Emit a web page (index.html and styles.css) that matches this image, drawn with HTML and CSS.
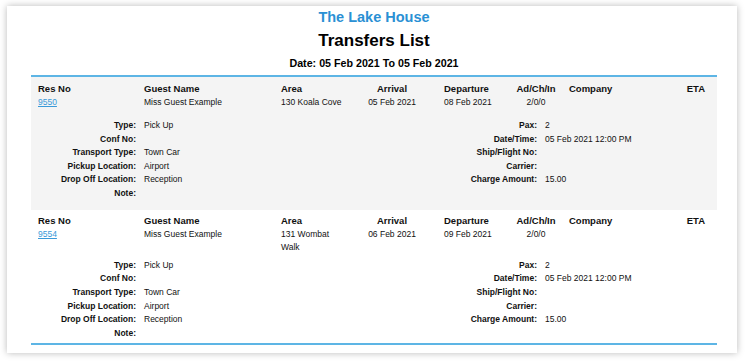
FILE: index.html
```html
<!DOCTYPE html>
<html>
<head>
<meta charset="utf-8">
<title>Transfers List</title>
<link rel="stylesheet" href="styles.css">
</head>
<body>
<div class="page">
  <div class="card">
    <div class="hotel">The Lake House</div>
    <h1 class="title">Transfers List</h1>
    <div class="range">Date: 05 Feb 2021 To 05 Feb 2021</div>
    <div class="report">
      <div class="record shaded">
        <div class="cols head">
          <div class="c1">Res No</div>
          <div class="c2">Guest Name</div>
          <div class="c3">Area</div>
          <div class="c4">Arrival</div>
          <div class="c5">Departure</div>
          <div class="c6">Ad/Ch/In</div>
          <div class="c7">Company</div>
          <div class="c8">ETA</div>
        </div>
        <div class="cols vals">
          <div class="c1"><a href="#" class="res">9550</a></div>
          <div class="c2">Miss Guest Example</div>
          <div class="c3">130 Koala Cove</div>
          <div class="c4">05 Feb 2021</div>
          <div class="c5">08 Feb 2021</div>
          <div class="c6">2/0/0</div>
          <div class="c7"></div>
          <div class="c8"></div>
        </div>
        <div class="details">
          <div class="lbl">Type:</div><div class="val">Pick Up</div><div class="lbl">Pax:</div><div class="val">2</div>
          <div class="lbl">Conf No:</div><div class="val"></div><div class="lbl">Date/Time:</div><div class="val">05 Feb 2021 12:00 PM</div>
          <div class="lbl">Transport Type:</div><div class="val">Town Car</div><div class="lbl">Ship/Flight No:</div><div class="val"></div>
          <div class="lbl">Pickup Location:</div><div class="val">Airport</div><div class="lbl">Carrier:</div><div class="val"></div>
          <div class="lbl">Drop Off Location:</div><div class="val">Reception</div><div class="lbl">Charge Amount:</div><div class="val">15.00</div>
          <div class="lbl">Note:</div><div class="val"></div><div class="lbl"></div><div class="val"></div>
        </div>
      </div>
      <div class="record">
        <div class="cols head">
          <div class="c1">Res No</div>
          <div class="c2">Guest Name</div>
          <div class="c3">Area</div>
          <div class="c4">Arrival</div>
          <div class="c5">Departure</div>
          <div class="c6">Ad/Ch/In</div>
          <div class="c7">Company</div>
          <div class="c8">ETA</div>
        </div>
        <div class="cols vals">
          <div class="c1"><a href="#" class="res">9554</a></div>
          <div class="c2">Miss Guest Example</div>
          <div class="c3">131 Wombat Walk</div>
          <div class="c4">06 Feb 2021</div>
          <div class="c5">09 Feb 2021</div>
          <div class="c6">2/0/0</div>
          <div class="c7"></div>
          <div class="c8"></div>
        </div>
        <div class="details">
          <div class="lbl">Type:</div><div class="val">Pick Up</div><div class="lbl">Pax:</div><div class="val">2</div>
          <div class="lbl">Conf No:</div><div class="val"></div><div class="lbl">Date/Time:</div><div class="val">05 Feb 2021 12:00 PM</div>
          <div class="lbl">Transport Type:</div><div class="val">Town Car</div><div class="lbl">Ship/Flight No:</div><div class="val"></div>
          <div class="lbl">Pickup Location:</div><div class="val">Airport</div><div class="lbl">Carrier:</div><div class="val"></div>
          <div class="lbl">Drop Off Location:</div><div class="val">Reception</div><div class="lbl">Charge Amount:</div><div class="val">15.00</div>
          <div class="lbl">Note:</div><div class="val"></div><div class="lbl"></div><div class="val"></div>
        </div>
      </div>
    </div>
  </div>
</div>
</body>
</html>
```

FILE: styles.css
```css
* { box-sizing: border-box; }
html, body { margin: 0; padding: 0; background: #ffffff; }
body {
  font-family: "Liberation Sans", Arial, sans-serif;
  color: #111111;
}
.page {
  padding: 6px 8px 8px 7px;
}
.card {
  background: #ffffff;
  height: 347px;
  box-shadow: 0 0 7px rgba(0, 0, 0, 0.28);
  padding: 2px 20px 8px 24px;
}
.hotel {
  text-align: center;
  color: #2a90d4;
  font-weight: bold;
  font-size: 14.5px;
  line-height: 18px;
}
.title {
  margin: 4px 0 0 0;
  text-align: center;
  font-weight: bold;
  font-size: 17px;
  line-height: 22px;
  color: #000;
}
.range {
  margin-top: 4px;
  text-align: center;
  font-weight: bold;
  font-size: 10.7px;
  line-height: 14px;
  color: #000;
}
.report {
  margin-top: 5px;
  border-top: 2px solid #5db5e5;
  border-bottom: 2px solid #5db5e5;
}
.record {
  padding: 5px 12px 9px 7px;
}
.record:last-child {
  padding-top: 4px;
  padding-bottom: 3px;
}
.record.shaded {
  background: #f4f4f4;
}
.cols {
  display: grid;
  grid-template-columns: 106px 137px 71px 80px 84px 40px 94px 55px;
}
.head {
  font-weight: bold;
  font-size: 9.5px;
  line-height: 14px;
}
.vals {
  font-size: 8.5px;
  line-height: 13.6px;
  min-height: 23px;
  padding-bottom: 4px;
}
.c3 { padding-right: 7px; }
.c4 { text-align: center; }
.c5 { padding-left: 12px; }
.c6 { text-align: center; white-space: nowrap; }
.c7 { padding-left: 13px; }
.c8 { text-align: right; }
.res {
  color: #3a9ad9;
  text-decoration: underline;
}
.details {
  display: grid;
  grid-template-columns: 98px 256px 129px 160px;
  column-gap: 8px;
  font-size: 8.5px;
  line-height: 13.6px;
}
.lbl {
  text-align: right;
  font-weight: bold;
  white-space: nowrap;
}
.val {
  white-space: nowrap;
  min-height: 13.6px;
}
```
